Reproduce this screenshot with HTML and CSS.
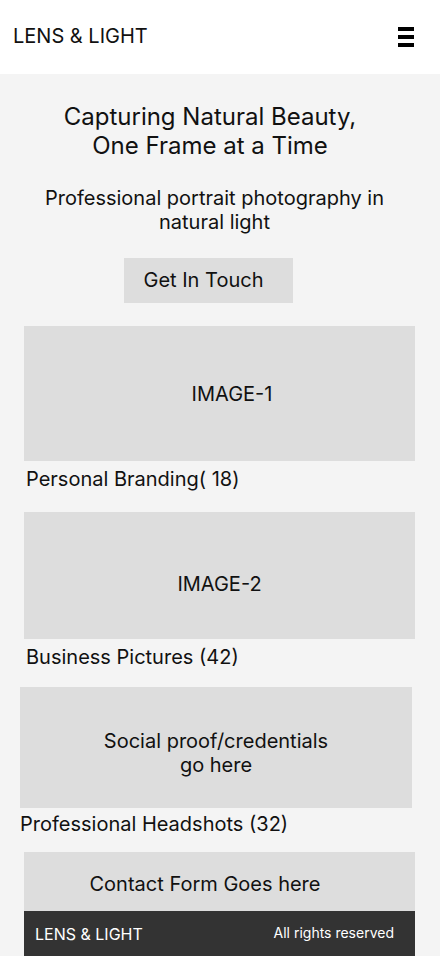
FILE: index.html
```html
<!DOCTYPE html>
<html lang="en">
<head>
<meta charset="utf-8">
<title>Lens &amp; Light</title>
<link rel="stylesheet" href="styles.css">
</head>
<body>
<header class="site-header">
  <div class="logo">LENS &amp; LIGHT</div>
  <button class="menu-btn" aria-label="Menu">
    <span class="bar"></span><span class="bar"></span><span class="bar"></span>
  </button>
</header>
<main class="page">
  <section class="hero">
    <h1 class="hero-title">Capturing Natural Beauty,<br>One Frame at a Time</h1>
    <p class="hero-sub">Professional portrait photography in<br>natural light</p>
    <a class="cta" href="#contact">Get In Touch</a>
  </section>

  <section class="gallery-item item-1">
    <div class="placeholder ph-1">IMAGE-1</div>
    <p class="caption">Personal Branding( 18)</p>
  </section>

  <section class="gallery-item item-2">
    <div class="placeholder ph-2">IMAGE-2</div>
    <p class="caption">Business Pictures (42)</p>
  </section>

  <section class="gallery-item item-3">
    <div class="placeholder ph-3">Social proof/credentials<br>go here</div>
    <p class="caption caption-3">Professional Headshots (32)</p>
  </section>

  <section class="contact" id="contact">
    <div class="contact-box">Contact Form Goes here</div>
    <footer class="site-footer">
      <span class="footer-logo">LENS &amp; LIGHT</span>
      <span class="footer-rights">All rights reserved</span>
    </footer>
  </section>
</main>
</body>
</html>
```
FILE: styles.css
```css
* { box-sizing: border-box; }
html, body { margin: 0; padding: 0; }
body {
  font-family: Inter, "Noto Sans", "Liberation Sans", sans-serif;
  background: #f4f4f4;
  color: #111;
  font-size: 20px;
  line-height: 24px;
}
.site-header {
  height: 74px;
  background: #fff;
  display: flex;
  align-items: center;
  justify-content: space-between;
  padding: 0 26px 2px 13px;
}
.logo { font-size: 20px; line-height: 24px; color: #111; }
.menu-btn {
  background: none;
  border: 0;
  padding: 0;
  width: 16px;
  display: flex;
  flex-direction: column;
  gap: 4px;
  margin-top: 1px;
}
.bar { display: block; width: 16px; height: 4px; background: #000; }

.page { display: flex; flex-direction: column; }

.hero {
  display: flex;
  flex-direction: column;
  align-items: center;
  text-align: center;
  padding-top: 28px;
}
.hero-title {
  margin: 0;
  font-size: 24px;
  line-height: 29px;
  font-weight: 400;
  padding-right: 20px;
}
.hero-sub {
  margin: 26px 0 0;
  padding-right: 11px;
  font-size: 20px;
  line-height: 24px;
}
.cta {
  margin: 24px 23px 0 0;
  display: block;
  background: #dddddd;
  color: #111;
  text-decoration: none;
  padding: 10px 30px 11px 20px;
  font-size: 20px;
  line-height: 24px;
}

.gallery-item { padding: 0 25px 0 24px; }
.placeholder {
  background: #dddddd;
  display: flex;
  align-items: center;
  justify-content: center;
  text-align: center;
}
.item-1 { margin-top: 23px; }
.ph-1 { height: 135px; padding-left: 25px; }
.item-2 { margin-top: 21px; }
.ph-2 { height: 127px; padding-top: 16px; }
.item-3 { margin-top: 18px; padding: 0 28px 0 20px; }
.ph-3 { height: 121px; padding-top: 10px; }
.caption { margin: 6px 0 0 2px; }
.caption-3 { margin: 4px 0 0 0; }

.contact { margin: 16px 25px 0 24px; }
.contact-box {
  background: #dddddd;
  height: 59px;
  padding: 20px 29px 0 0;
  text-align: center;
}
.site-footer {
  background: #333;
  color: #fff;
  height: 46px;
  display: flex;
  align-items: center;
  justify-content: space-between;
  padding: 0 21px 0 11px;
}
.footer-logo { font-size: 16px; line-height: 20px; }
.footer-rights { font-size: 14px; line-height: 18px; margin-top: -2px; }
```
